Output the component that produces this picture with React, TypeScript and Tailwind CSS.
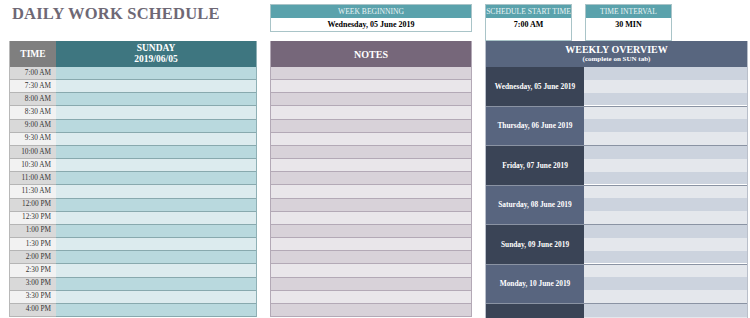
import React from "react";

const times = [
  "7:00 AM","7:30 AM","8:00 AM","8:30 AM","9:00 AM","9:30 AM","10:00 AM","10:30 AM","11:00 AM","11:30 AM",
  "12:00 PM","12:30 PM","1:00 PM","1:30 PM","2:00 PM","2:30 PM","3:00 PM","3:30 PM","4:00 PM",
];
const days = [
  "Wednesday, 05 June 2019","Thursday, 06 June 2019","Friday, 07 June 2019","Saturday, 08 June 2019",
  "Sunday, 09 June 2019","Monday, 10 June 2019","",
];

const serif = { fontFamily: '"Liberation Serif", "DejaVu Serif", serif' };

function SmallBox({ label, value, w }: { label: string; value: string; w: string }) {
  return (
    <div className={`${w} border border-[#a9c4c8] flex flex-col`}>
      <div className="h-[13px] bg-[#5aa2ac] text-[#e8f3f4] text-[7.6px] leading-[13px] text-center whitespace-nowrap overflow-hidden">{label}</div>
      <div className="h-[13px] bg-white text-black text-[8px] font-bold leading-[13px] text-center">{value}</div>
    </div>
  );
}

export default function App() {
  return (
    <div className="w-[750px] h-[318px] overflow-hidden bg-white relative" style={serif}>
      <div className="flex items-start pl-[9px] gap-[13px]">
        {/* Left section */}
        <div className="w-[248px] flex flex-col">
          <div className="h-[41px] pl-[3px] pt-[4px]">
            <div className="text-[16.5px] font-bold text-[#6e6875] leading-[20px] tracking-[0.2px]">DAILY WORK SCHEDULE</div>
          </div>
          <div className="flex border-l border-[#b8b8b8]">
            <div className="w-[46px] flex flex-col">
              <div className="h-[26px] bg-[#7f7f7f] text-white text-[9.5px] font-bold flex items-center justify-center">TIME</div>
              {times.map((t, i) => (
                <div
                  key={t}
                  className={`h-[13.16px] border-b border-[#b5b5b5] text-[7.3px] text-[#333] flex items-center justify-end pr-[5px] whitespace-nowrap ${i % 2 === 0 ? "bg-[#d9d9d9]" : "bg-[#f2f2f2]"}`}
                >
                  {t}
                </div>
              ))}
            </div>
            <div className="flex-1 flex flex-col border-r border-[#8fb0b5]">
              <div className="h-[26px] bg-[#3e7680] text-white text-[9.5px] font-bold flex flex-col items-center justify-center leading-[11px]">
                <div>SUNDAY</div>
                <div>2019/06/05</div>
              </div>
              {times.map((t, i) => (
                <div
                  key={t}
                  className={`h-[13.16px] border-b border-[#88a9ae] ${i % 2 === 0 ? "bg-[#b9d9de]" : "bg-[#dcebee]"}`}
                />
              ))}
            </div>
          </div>
        </div>

        {/* Notes section */}
        <div className="w-[202px] flex flex-col">
          <div className="h-[41px] pt-[4px]">
            <SmallBox label="WEEK BEGINNING" value="Wednesday, 05 June 2019" w="w-[202px]" />
          </div>
          <div className="flex flex-col border-x border-[#b3a9b6]">
            <div className="h-[26px] bg-[#76677a] text-white text-[10px] font-bold flex items-center justify-center">NOTES</div>
            {times.map((t, i) => (
              <div
                key={t}
                className={`h-[13.16px] border-b border-[#b3a9b6] ${i % 2 === 0 ? "bg-[#d8d2d9]" : "bg-[#e9e6ea]"}`}
              />
            ))}
          </div>
        </div>

        {/* Overview section */}
        <div className="w-[263px] flex flex-col">
          <div className="h-[41px] pt-[4px] flex gap-[13px]">
            <SmallBox label="SCHEDULE START TIME" value="7:00 AM" w="w-[87px]" />
            <SmallBox label="TIME INTERVAL" value="30 MIN" w="w-[87px]" />
          </div>
          <div className="flex flex-col border-x border-[#b9bfca]">
            <div className="h-[26px] bg-[#58667f] text-white font-bold flex flex-col items-center justify-center">
              <div className="text-[10px] leading-[11px]">WEEKLY OVERVIEW</div>
              <div className="text-[7px] leading-[9px]">(complete on SUN tab)</div>
            </div>
            {days.map((d, di) => (
              <div key={di} className="flex h-[39.5px] border-b border-[#8a93a3]">
                <div
                  className={`w-[98px] text-white text-[7.4px] font-bold flex items-center justify-center whitespace-nowrap ${di % 2 === 0 ? "bg-[#3a4456]" : "bg-[#58657f]"}`}
                >
                  {d}
                </div>
                <div className="flex-1 flex flex-col">
                  {[0, 1, 2].map((r) => {
                    const idx = di * 3 + r;
                    return (
                      <div key={r} className={`flex-1 ${idx % 2 === 0 ? "bg-[#ccd3de]" : "bg-[#e4e7ec]"}`} />
                    );
                  })}
                </div>
              </div>
            ))}
          </div>
        </div>
      </div>
    </div>
  );
}
